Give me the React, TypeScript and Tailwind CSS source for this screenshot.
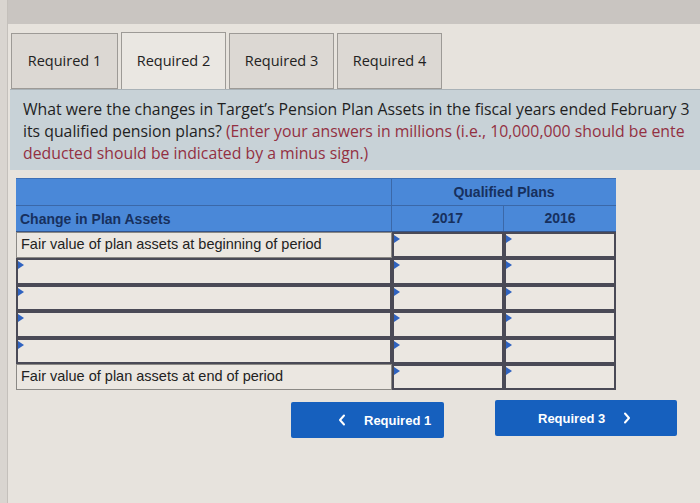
import React from "react";

const Tri = () => (
  <span className="absolute left-0 top-[1px] w-0 h-0 border-y-[4px] border-y-transparent border-l-[6px] border-l-[#2f63c0]" />
);

const InputCell = ({ w }: { w: string }) => (
  <div className={`relative ${w} h-full border-2 border-[#4a4a56] bg-[#ebe7e1]`}>
    <Tri />
  </div>
);

export default function App() {
  const labelFont = { fontFamily: '"Liberation Sans", Arial, sans-serif' };
  const rows = [
    { label: "Fair value of plan assets at beginning of period", input: false },
    { label: "", input: true },
    { label: "", input: true },
    { label: "", input: true },
    { label: "", input: true },
    { label: "Fair value of plan assets at end of period", input: false },
  ];
  return (
    <div className="w-[700px] h-[503px] overflow-hidden bg-[#d9d5d0] flex">
      <div className="ml-[7px] flex-1 flex flex-col bg-[#e7e3dd] border-l border-[#c4c0bb]">
        <div className="h-[24px] bg-[#c9c5c1] shrink-0" />
        {/* Tabs */}
        <div
          className="flex items-end gap-[3px] mt-[8px] ml-[3px] h-[57px]"
          style={{ fontFamily: '"Open Sans", "Noto Sans", sans-serif' }}
        >
          <div className="w-[107px] h-[56px] flex items-center justify-center bg-[#dcd8d3] border border-[#9d9a96] text-[14.5px] text-[#222]">
            Required 1
          </div>
          <div className="w-[105px] h-[57px] flex items-center justify-center bg-[#eae7e2] border border-b-0 border-[#9d9a96] text-[14.5px] text-[#222]">
            Required 2
          </div>
          <div className="w-[105px] h-[56px] flex items-center justify-center bg-[#dcd8d3] border border-[#9d9a96] text-[14.5px] text-[#222]">
            Required 3
          </div>
          <div className="w-[105px] h-[56px] flex items-center justify-center bg-[#dcd8d3] border border-[#9d9a96] text-[14.5px] text-[#222]">
            Required 4
          </div>
        </div>
        {/* Instructions */}
        <div
          className="ml-[2px] bg-[#c8d2d7] border-t border-[#a9b2b7] pt-[8px] pb-[6px] pl-[13px] text-[15.8px] leading-[22px] text-[#1f1f1f] whitespace-nowrap overflow-hidden"
          style={{ fontFamily: '"Open Sans", "Noto Sans", sans-serif' }}
        >
          <div>What were the changes in Target’s Pension Plan Assets in the fiscal years ended February 3</div>
          <div>
            its qualified pension plans?{" "}
            <span className="text-[#933042]">(Enter your answers in millions (i.e., 10,000,000 should be ente</span>
          </div>
          <div className="text-[#933042]">deducted should be indicated by a minus sign.)</div>
        </div>
        {/* Table */}
        <div className="ml-[8px] mt-[8px] w-[600px] flex flex-col" style={labelFont}>
          <div className="flex h-[27px] bg-[#4a88d8] border-t border-[#3e6fb5]">
            <div className="w-[376px] border-r border-[#3b68a8]" />
            <div className="flex-1 flex items-center justify-center text-[14px] font-bold text-[#17305e]">
              Qualified Plans
            </div>
          </div>
          <div className="flex h-[27px] bg-[#4a88d8] border-t border-[#3b68a8] border-b border-b-[#34548a]">
            <div className="w-[376px] border-r border-[#3b68a8] flex items-end pb-[1px] pl-[4px] text-[14px] font-bold text-[#17305e]">
              Change in Plan Assets
            </div>
            <div className="w-[112px] border-r border-[#3b68a8] flex items-center justify-center text-[14px] font-bold text-[#17305e]">
              2017
            </div>
            <div className="w-[112px] flex items-center justify-center text-[14px] font-bold text-[#17305e]">
              2016
            </div>
          </div>
          {rows.map((r, i) => (
            <div key={i} className="flex h-[26.4px]">
              {r.input ? (
                <InputCell w="w-[376px]" />
              ) : (
                <div className="w-[376px] h-full border border-[#8b8985] bg-[#ebe7e1] flex items-center pl-[4px] text-[14.5px] text-[#222]">
                  {r.label}
                </div>
              )}
              <InputCell w="w-[112px]" />
              <InputCell w="w-[112px]" />
            </div>
          ))}
        </div>
        {/* Buttons */}
        <div className="flex mt-[12px] ml-[283px] gap-[51px]" style={labelFont}>
          <button className="w-[153px] h-[36px] bg-[#1660be] rounded-[2px] flex items-center pl-[47px] gap-[18px] text-white text-[13px] font-bold">
            <svg width="8" height="12" viewBox="0 0 8 12" fill="none">
              <path d="M6 1.5L2 6l4 4.5" stroke="white" strokeWidth="2" strokeLinecap="round" strokeLinejoin="round" />
            </svg>
            <span>Required 1</span>
          </button>
          <button className="w-[182px] h-[36px] -mt-[2px] bg-[#1660be] rounded-[2px] flex items-center pl-[43px] gap-[18px] text-white text-[13px] font-bold">
            <span>Required 3</span>
            <svg width="8" height="12" viewBox="0 0 8 12" fill="none">
              <path d="M2 1.5L6 6l-4 4.5" stroke="white" strokeWidth="2" strokeLinecap="round" strokeLinejoin="round" />
            </svg>
          </button>
        </div>
      </div>
    </div>
  );
}
